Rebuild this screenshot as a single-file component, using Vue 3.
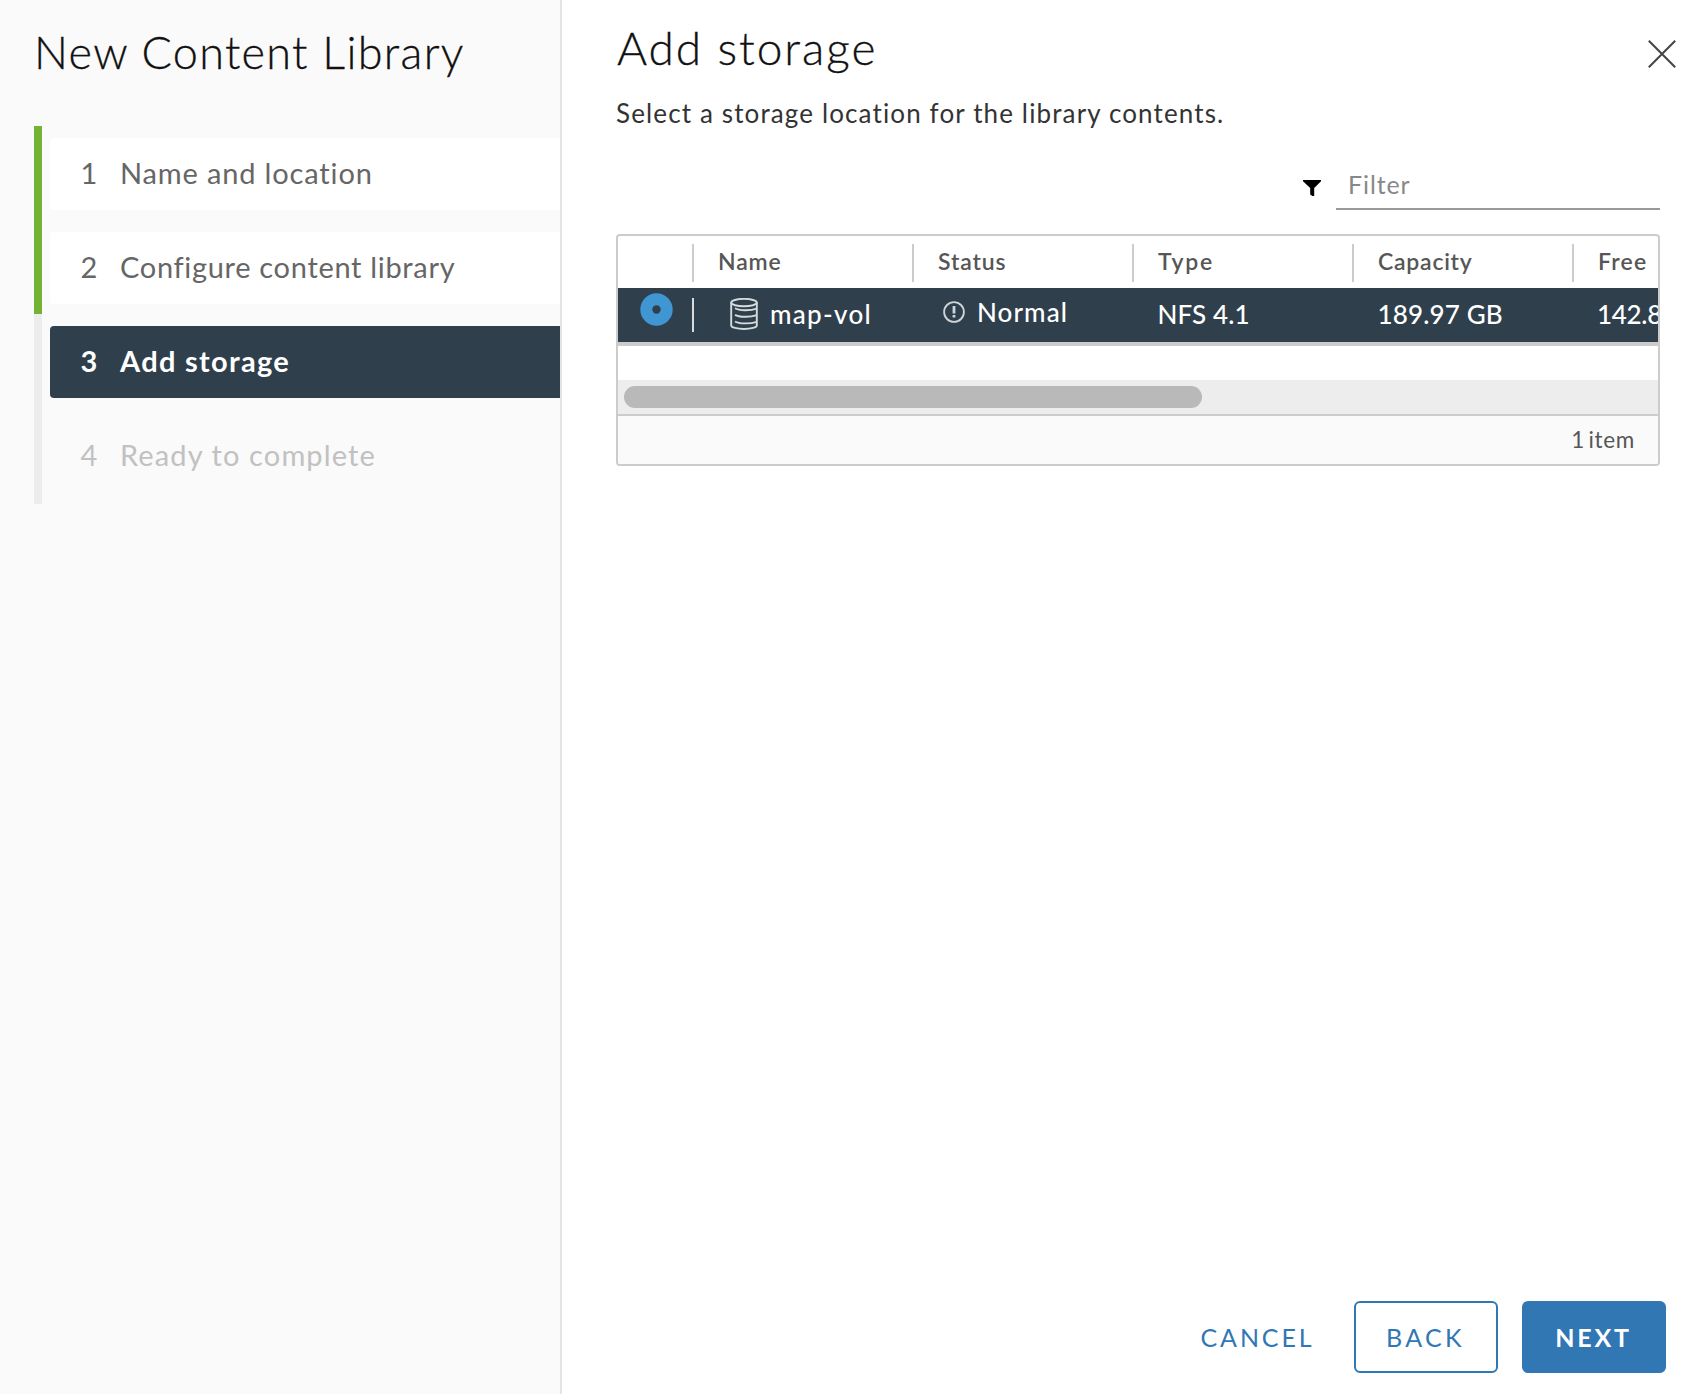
<script setup>
const steps = [
  { n: 1, label: 'Name and location', state: 'done' },
  { n: 2, label: 'Configure content library', state: 'done' },
  { n: 3, label: 'Add storage', state: 'current' },
  { n: 4, label: 'Ready to complete', state: 'todo' },
]
const columns = ['Name', 'Status', 'Type', 'Capacity', 'Free']
</script>

<template>
  <div class="wizard">
    <aside class="sidebar">
      <h1 class="title">New Content Library</h1>
      <ol class="steps">
        <li v-for="s in steps" :key="s.n" class="step" :class="s.state">
          <div class="card">
            <span class="num">{{ s.n }}</span>
            <span :class="'label-' + s.n">{{ s.label }}</span>
          </div>
        </li>
      </ol>
    </aside>
    <main class="content">
      <header class="head">
        <div>
          <h2 class="heading">Add storage</h2>
          <p class="sub">Select a storage location for the library contents.</p>
        </div>
        <svg class="close" viewBox="0 0 28 28"><path d="M0.8 0.8 27.2 27.2M27.2 0.8 0.8 27.2" fill="none" stroke="#444" stroke-width="2" /></svg>
      </header>
      <div class="filter">
        <svg class="funnel" viewBox="0 0 18 16"><path d="M0 0H18V1.2L11.2 8V16H9.4L7.2 14.4V8L0 1.2Z" fill="#000" /></svg>
        <div class="field">Filter</div>
      </div>
      <section class="grid">
        <div class="row hrow">
          <div class="sel"></div>
          <div v-for="c in columns" :key="c" class="col" :class="'h-' + c.toLowerCase()">{{ c }}</div>
        </div>
        <div class="row drow">
          <div class="sel">
            <svg class="radio" viewBox="0 0 33 33"><circle cx="16.5" cy="16.5" r="16.2" fill="#4095d3" /><circle cx="16.5" cy="16.5" r="4.2" fill="#2f404c" /></svg>
          </div>
          <div class="col name">
            <i class="divider"></i>
            <svg class="db" viewBox="0 0 28 32" fill="none" stroke="#d5dadd" stroke-width="1.9">
              <ellipse cx="14" cy="4.6" rx="12.8" ry="3.7" />
              <path d="M1.2 4.6V27.4C1.2 29.4 7 31 14 31S26.8 29.4 26.8 27.4V4.6" />
              <path d="M5 10.3C9 12.7 20 12.9 26.8 10.6" />
              <path d="M5 16.9C9 19.3 20 19.5 26.8 17.2" />
              <path d="M5 23.5C9 25.9 20 26.1 26.8 23.8" />
            </svg>
            <span>map-vol</span>
          </div>
          <div class="col status">
            <svg class="warn" viewBox="0 0 22 22" fill="none" stroke="#cfd4d8"><circle cx="11" cy="11" r="9.9" stroke-width="1.8" /><path d="M11 5V12.6M11 14V16.6" stroke-width="2.8" /></svg>
            <span>Normal</span>
          </div>
          <div class="col">NFS 4.1</div>
          <div class="col">189.97 GB</div>
          <div class="col free">142.8</div>
        </div>
        <div class="gap"></div>
        <div class="scroll"><div class="thumb"></div></div>
        <footer class="foot">1 item</footer>
      </section>
      <div class="actions">
        <button class="btn link">CANCEL</button>
        <button class="btn outline">BACK</button>
        <button class="btn primary">NEXT</button>
      </div>
    </main>
  </div>
</template>

<style>
body { margin: 0; background: #fff; }
</style>

<style scoped>
* { box-sizing: border-box; }
.wizard { display: flex; width: 1694px; height: 1394px; font-family: Lato, "Open Sans", sans-serif; font-variant-ligatures: none; overflow: hidden; background: #fff; }
svg { display: block; flex: none; }

.sidebar { width: 562px; flex: none; background: #fafafa; border-right: 2px solid #e4e4e4; padding: 22px 0 0 34px; }
.title { margin: 0 0 44px; font-weight: 300; font-size: 45px; line-height: 60px; letter-spacing: 1.3px; color: #111; -webkit-text-stroke: 0.3px #111; white-space: nowrap; }
.steps { margin: 0; padding: 0; list-style: none; }
.step { height: 94px; padding: 12px 0 0 8px; border-left: 8px solid #ececec; }
.step.done { border-left-color: #73b233; }
.step.todo { height: 96px; }
.card { display: flex; height: 72px; border-radius: 4px 0 0 4px; font-size: 29px; line-height: 69px; color: #666; white-space: nowrap; }
.num { width: 70px; padding-left: 8px; text-align: center; }
.done .card { background: #fff; }
.current .card { background: #2f404c; color: #fff; font-weight: 700; }
.todo .card { color: #c1c1c1; }
.label-1 { letter-spacing: 0.85px; }
.label-2 { letter-spacing: 0.68px; }
.label-3 { letter-spacing: 1.3px; }
.label-4 { letter-spacing: 1.12px; }

.content { flex: 1; display: flex; flex-direction: column; padding: 0 28px 21px 54px; }
.head { display: flex; justify-content: space-between; height: 166px; margin-right: -10px; padding-top: 17px; }
.heading { margin: 0; padding-left: 1px; font-weight: 300; font-size: 46px; line-height: 61px; letter-spacing: 1.95px; color: #111; -webkit-text-stroke: 0.3px #111; }
.sub { margin: 19px 0 0; font-size: 26px; line-height: 32px; letter-spacing: 1.13px; color: #333; }
.close { width: 28px; height: 28px; margin: 23px 0 0; }
.filter { display: flex; justify-content: flex-end; height: 44px; margin-right: 6px; }
.funnel { width: 18px; height: 16px; margin: 14px 15px 0 0; }
.field { width: 324px; border-bottom: 2px solid #999; padding-left: 12px; font-size: 25px; line-height: 37px; letter-spacing: 0.9px; color: #888; }

.grid { margin-top: 24px; width: 1044px; height: 232px; border: 2px solid #ccc; border-radius: 4px; overflow: hidden; }
.row { display: flex; width: 1200px; }
.sel { width: 74px; flex: none; }
.col { width: 220px; flex: none; white-space: nowrap; }
.hrow { height: 52px; padding-top: 8px; font-size: 23px; line-height: 35px; font-weight: 600; color: #565656; }
.hrow .col { height: 38px; border-left: 2px solid #ccc; padding-left: 24px; }
.h-name { letter-spacing: 0.8px; }
.h-status { letter-spacing: 0.85px; }
.h-type { letter-spacing: 1.8px; }
.h-capacity { letter-spacing: 0.75px; }
.h-free { letter-spacing: 1.2px; }
.drow { height: 58px; background: #2f404c; border-bottom: 4px solid #ccc; color: #fff; font-size: 26px; line-height: 53px; letter-spacing: 0.15px; font-weight: 500; }
.drow .sel { padding: 5px 0 0 22px; }
.drow .col { display: flex; padding-left: 25.5px; }
.radio { width: 33px; height: 33px; }
.drow .name { padding-left: 0; letter-spacing: 1.3px; }
.drow .free { padding-left: 25px; letter-spacing: -0.3px; }
.divider { width: 2px; height: 34px; margin-top: 10px; background: #d8dbdd; }
.db { width: 28px; height: 32px; margin: 10px 12px 0 36px; }
.drow .status { padding-left: 31px; line-height: 49px; letter-spacing: 1.1px; }
.warn { width: 22px; height: 22px; margin: 13px 12px 0 0; }
.gap { height: 34px; }
.scroll { height: 34px; background: #ededed; padding: 6px; }
.thumb { width: 578px; height: 22px; border-radius: 11px; background: #b9b9b9; }
.foot { height: 50px; border-top: 2px solid #ccc; background: #fafafa; text-align: right; padding-right: 23px; font-size: 22.5px; line-height: 48px; letter-spacing: 0.7px; word-spacing: -3px; color: #565656; }

.actions { display: flex; justify-content: flex-end; margin-top: auto; gap: 24px; }
.btn { width: 144px; height: 72px; padding: 0 1px 1px 0; font-family: inherit; font-size: 25px; letter-spacing: 2.9px; border: 2px solid #3177b4; border-radius: 6px; background: #fff; color: #3177b4; }
.link { border-color: transparent; }
.outline { letter-spacing: 3.3px; }
.primary { background: #3177b4; color: #fff; font-weight: 700; letter-spacing: 2.8px; }
</style>
